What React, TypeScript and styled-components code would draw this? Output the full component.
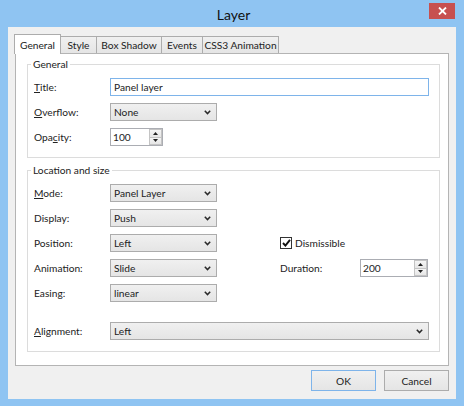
import React from "react";
import styled, { createGlobalStyle } from "styled-components";

const FONT = `Lato, "Open Sans", "Liberation Sans", sans-serif`;

const GlobalStyle = createGlobalStyle`
  html, body { margin: 0; padding: 0; }
  body { background: #8fc4f2; font-family: ${FONT}; }
`;

const Window = styled.div`
  width: 464px;
  height: 406px;
  box-sizing: border-box;
  background: #8fc4f2;
  padding: 0 8px 7px;
  display: flex;
  flex-direction: column;
  font-family: ${FONT};
  font-size: 10.2px;
  color: #222;
`;

const TitleBar = styled.div`
  height: 27px;
  flex: none;
  display: grid;
  grid-template-columns: 1fr auto 1fr;
  align-items: center;
`;

const TitleText = styled.div`
  grid-column: 2;
  font-size: 14px;
  color: #111;
  padding-top: 1px;
  padding-left: 3px;
`;

const CloseButton = styled.div`
  grid-column: 3;
  justify-self: end;
  align-self: start;
  margin-top: 3px;
  margin-right: 1px;
  width: 26px;
  height: 16px;
  background: #c75050;
  display: flex;
  align-items: center;
  justify-content: center;
`;

const Client = styled.div`
  flex: 1;
  background: #f0f0f0;
  display: flex;
  flex-direction: column;
  padding: 7px 7px 8px 7px;
  box-sizing: border-box;
`;

const TabStrip = styled.div`
  display: flex;
  align-items: flex-end;
  height: 19px;
  margin-left: -1px;
  flex: none;
`;

const Tab = styled.div<{ $active?: boolean; $w: number }>`
  box-sizing: border-box;
  width: ${(p) => p.$w}px;
  height: ${(p) => (p.$active ? 20 : 17)}px;
  margin-bottom: ${(p) => (p.$active ? -1 : 0)}px;
  border: 1px solid #acacac;
  border-bottom: none;
  background: ${(p) => (p.$active ? "#ffffff" : "linear-gradient(#f0f0f0, #e5e5e5)")};
  display: flex;
  align-items: center;
  justify-content: center;
  position: relative;
  z-index: ${(p) => (p.$active ? 2 : 1)};
  white-space: nowrap;
  & + & {
    margin-left: -1px;
  }
`;

const Panel = styled.div`
  box-sizing: border-box;
  height: 313px;
  flex: none;
  background: #fff;
  border: 1px solid #b4b4b4;
  padding: 3px 8px 0 11px;
  display: flex;
  flex-direction: column;
  gap: 5px;
`;

const Group = styled.fieldset`
  margin: 0;
  min-width: 0;
  border: 1px solid #dcdcdc;
  padding: 7px 10px 11px 6px;
  box-sizing: border-box;
`;

const Legend = styled.legend`
  padding: 0 2px;
  margin-left: -3px;
  line-height: 14px;
  color: #222;
`;

const Rows = styled.div`
  display: flex;
  flex-direction: column;
  gap: 7px;
`;

const Row = styled.div<{ $spaced?: boolean }>`
  display: grid;
  grid-template-columns: 76px 107px 63px 80px 69px;
  height: 18px;
  align-items: center;
  margin-top: ${(p) => (p.$spaced ? 13 : 0)}px;
`;

const Label = styled.span<{ $col?: number }>`
  grid-column: ${(p) => p.$col ?? 1};
  white-space: nowrap;
`;

const Key = styled.u`
  text-decoration: underline;
  text-underline-offset: 1px;
`;

const Cell = styled.div<{ $col: number; $span?: number }>`
  grid-column: ${(p) => p.$col} / span ${(p) => p.$span ?? 1};
  height: 18px;
  display: flex;
  align-items: center;
`;

const TextBox = styled.div<{ $focused?: boolean }>`
  box-sizing: border-box;
  width: 100%;
  height: 18px;
  border: 1px solid ${(p) => (p.$focused ? "#7eb4ea" : "#abadb3")};
  background: #fff;
  padding-left: 3px;
  display: flex;
  align-items: center;
  white-space: nowrap;
`;

const Combo = styled.div`
  box-sizing: border-box;
  width: 100%;
  height: 18px;
  border: 1px solid #acacac;
  background: linear-gradient(#f0f0f0, #e5e5e5);
  padding: 0 5px 0 3px;
  display: flex;
  align-items: center;
  justify-content: space-between;
  white-space: nowrap;
`;

const Spin = styled.div<{ $w: number }>`
  box-sizing: border-box;
  width: ${(p) => p.$w}px;
  height: 18px;
  border: 1px solid #abadb3;
  background: #fff;
  display: flex;
`;

const SpinValue = styled.div`
  flex: 1;
  padding-left: 2px;
  display: flex;
  align-items: center;
`;

const SpinButtons = styled.div`
  width: 13px;
  display: flex;
  flex-direction: column;
`;

const SpinBtn = styled.div`
  flex: 1;
  box-sizing: border-box;
  border: 1px solid #c4c4c4;
  background: linear-gradient(#f5f5f5, #e6e6e6);
  display: flex;
  align-items: center;
  justify-content: center;
  & + & {
    margin-top: -1px;
  }
`;

const CheckWrap = styled.div`
  grid-column: 4 / span 2;
  display: flex;
  align-items: center;
  gap: 3px;
`;

const CheckBox = styled.div`
  box-sizing: border-box;
  width: 12px;
  height: 12px;
  border: 1px solid #333;
  background: #fff;
  display: flex;
  align-items: center;
  justify-content: center;
`;

const Footer = styled.div`
  display: flex;
  justify-content: flex-end;
  gap: 8px;
  margin-top: 4px;
  flex: none;
`;

const Button = styled.div<{ $default?: boolean }>`
  box-sizing: border-box;
  width: 65px;
  height: 21px;
  border: 1px solid ${(p) => (p.$default ? "#7eb4ea" : "#acacac")};
  background: linear-gradient(#f0f0f0, #e5e5e5);
  display: flex;
  align-items: center;
  justify-content: center;
`;

const Chevron = () => (
  <svg width="7" height="5" viewBox="0 0 7 5">
    <polyline points="0.8,0.8 3.5,3.6 6.2,0.8" fill="none" stroke="#2a2a2a" strokeWidth="1.5" />
  </svg>
);

const ArrowUp = () => (
  <svg width="5" height="3" viewBox="0 0 5 3">
    <polygon points="0,3 2.5,0 5,3" fill="#222" />
  </svg>
);

const ArrowDown = () => (
  <svg width="5" height="3" viewBox="0 0 5 3">
    <polygon points="0,0 5,0 2.5,3" fill="#222" />
  </svg>
);

const Select = ({ value }: { value: string }) => (
  <Combo>
    <span>{value}</span>
    <Chevron />
  </Combo>
);

const Spinner = ({ value, w }: { value: string; w: number }) => (
  <Spin $w={w}>
    <SpinValue>{value}</SpinValue>
    <SpinButtons>
      <SpinBtn>
        <ArrowUp />
      </SpinBtn>
      <SpinBtn>
        <ArrowDown />
      </SpinBtn>
    </SpinButtons>
  </Spin>
);

const tabs = [
  { label: "General", w: 47, active: true },
  { label: "Style", w: 37 },
  { label: "Box Shadow", w: 66 },
  { label: "Events", w: 42 },
  { label: "CSS3 Animation", w: 77 },
];

export default function App() {
  return (
    <>
      <GlobalStyle />
      <Window>
        <TitleBar>
          <TitleText>Layer</TitleText>
          <CloseButton>
            <svg width="9" height="8" viewBox="0 0 9 8">
              <path d="M1 0.5 L8 7.5 M8 0.5 L1 7.5" stroke="#fff" strokeWidth="1.8" />
            </svg>
          </CloseButton>
        </TitleBar>
        <Client>
          <TabStrip>
            {tabs.map((t) => (
              <Tab key={t.label} $w={t.w} $active={t.active}>
                {t.label}
              </Tab>
            ))}
          </TabStrip>
          <Panel>
            <Group>
              <Legend>General</Legend>
              <Rows>
                <Row>
                  <Label>
                    <Key>T</Key>itle:
                  </Label>
                  <Cell $col={2} $span={4}>
                    <TextBox $focused>Panel layer</TextBox>
                  </Cell>
                </Row>
                <Row>
                  <Label>
                    <Key>O</Key>verflow:
                  </Label>
                  <Cell $col={2}>
                    <Select value="None" />
                  </Cell>
                </Row>
                <Row>
                  <Label>
                    Opa<Key>c</Key>ity:
                  </Label>
                  <Cell $col={2}>
                    <Spinner value="100" w={53} />
                  </Cell>
                </Row>
              </Rows>
            </Group>
            <Group>
              <Legend>Location and size</Legend>
              <Rows>
                <Row>
                  <Label>
                    <Key>M</Key>ode:
                  </Label>
                  <Cell $col={2}>
                    <Select value="Panel Layer" />
                  </Cell>
                </Row>
                <Row>
                  <Label>Display:</Label>
                  <Cell $col={2}>
                    <Select value="Push" />
                  </Cell>
                </Row>
                <Row>
                  <Label>Position:</Label>
                  <Cell $col={2}>
                    <Select value="Left" />
                  </Cell>
                  <CheckWrap>
                    <CheckBox>
                      <svg width="9" height="8" viewBox="0 0 9 8">
                        <polyline points="1,4 3.4,6.6 8,0.8" fill="none" stroke="#111" strokeWidth="1.9" />
                      </svg>
                    </CheckBox>
                    <span>Dismissible</span>
                  </CheckWrap>
                </Row>
                <Row>
                  <Label>Animation:</Label>
                  <Cell $col={2}>
                    <Select value="Slide" />
                  </Cell>
                  <Label $col={4}>Duration:</Label>
                  <Cell $col={5}>
                    <Spinner value="200" w={68} />
                  </Cell>
                </Row>
                <Row>
                  <Label>Easing:</Label>
                  <Cell $col={2}>
                    <Select value="linear" />
                  </Cell>
                </Row>
                <Row $spaced>
                  <Label>
                    <Key>A</Key>lignment:
                  </Label>
                  <Cell $col={2} $span={4}>
                    <Select value="Left" />
                  </Cell>
                </Row>
              </Rows>
            </Group>
          </Panel>
          <Footer>
            <Button $default>OK</Button>
            <Button>Cancel</Button>
          </Footer>
        </Client>
      </Window>
    </>
  );
}
